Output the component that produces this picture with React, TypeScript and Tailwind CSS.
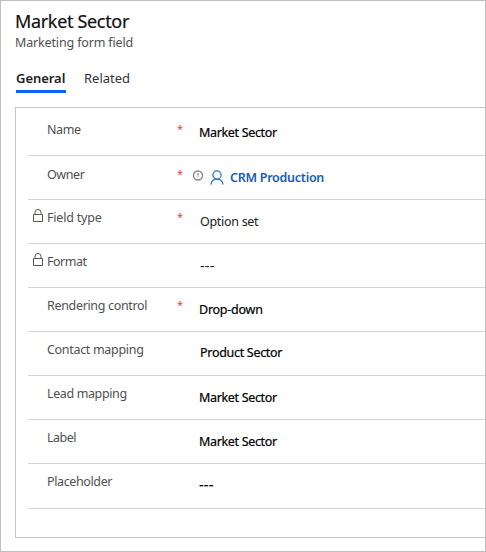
type Row = {
  label: string;
  value: string;
  height: string;
  labelPad: string;
  valuePad: string;
  labelTrack: string;
  valueClass: string;
  required?: boolean;
  locked?: boolean;
  owner?: boolean;
};

const strong = "text-black [-webkit-text-stroke:0.2px_#000]";

const rows: Row[] = [
  { label: "Name", value: "Market Sector", height: "h-12", labelPad: "pt-[11px]", valuePad: "pt-3.5", labelTrack: "tracking-[-0.4px]", valueClass: `${strong} pl-[19px] tracking-[-0.33px]`, required: true },
  { label: "Owner", value: "CRM Production", height: "h-11", labelPad: "pt-2", valuePad: "pt-[11px]", labelTrack: "tracking-[-0.4px]", valueClass: "font-semibold text-[#1160b7] pl-1.5 tracking-[-0.27px]", required: true, owner: true },
  { label: "Field type", value: "Option set", height: "h-11", labelPad: "pt-[7px]", valuePad: "pt-[11px]", labelTrack: "tracking-[-0.2px]", valueClass: "text-[#222] pl-5 tracking-[-0.3px]", required: true, locked: true },
  { label: "Format", value: "---", height: "h-11", labelPad: "pt-[7px]", valuePad: "pt-3", labelTrack: "tracking-[-0.5px]", valueClass: "text-[#222] text-[14.5px] leading-[19px] pl-5 tracking-[0.2px]", locked: true },
  { label: "Rendering control", value: "Drop-down", height: "h-11", labelPad: "pt-[7px]", valuePad: "pt-[11px]", labelTrack: "tracking-[-0.33px]", valueClass: `${strong} pl-[19px] tracking-[-0.25px]`, required: true },
  { label: "Contact mapping", value: "Product Sector", height: "h-11", labelPad: "pt-[7px]", valuePad: "pt-2.5", labelTrack: "tracking-[-0.31px]", valueClass: `${strong} pl-5 tracking-[-0.3px]` },
  { label: "Lead mapping", value: "Market Sector", height: "h-11", labelPad: "pt-[7px]", valuePad: "pt-[11px]", labelTrack: "tracking-[-0.38px]", valueClass: `${strong} pl-[19px] tracking-[-0.33px]` },
  { label: "Label", value: "Market Sector", height: "h-11", labelPad: "pt-[7px]", valuePad: "pt-[11px]", labelTrack: "tracking-[-0.5px]", valueClass: `${strong} pl-[19px] tracking-[-0.33px]` },
  { label: "Placeholder", value: "---", height: "h-[45px]", labelPad: "pt-[7px]", valuePad: "pt-[11px]", labelTrack: "tracking-[-0.38px]", valueClass: `${strong} text-[14.5px] leading-[19px] pl-[19px] tracking-[0.2px]` },
];

function LockIcon() {
  return (
    <svg width="12" height="15" viewBox="0 0 12 15" fill="none" stroke="#555" className="mt-px ml-1 shrink-0">
      <path d="M1.5 6.5h9v7h-9zM3 6.5V4.3a3 2.8 0 0 1 6 0v2.2" />
    </svg>
  );
}

function OwnerIcons() {
  return (
    <div className="flex">
      <svg width="12" height="12" viewBox="0 0 12 12" fill="none" stroke="#888" className="ml-3 mt-[3px]">
        <circle cx="6" cy="5.5" r="4.5" strokeWidth="1.4" />
        <path d="M4.7 4.5 6 3.3l1.3 1.2M6 3.7v3.8" strokeWidth="0.8" />
      </svg>
      <svg width="14" height="15" viewBox="0 0 14 15" fill="none" stroke="#2d74c6" strokeWidth="1.2" className="ml-[6px] mt-[3px]">
        <circle cx="7" cy="5" r="4.1" />
        <path d="M1 14.6C1.4 11.2 3.7 9.2 7 9.2s5.6 2 6 5.4" />
      </svg>
    </div>
  );
}

function FieldRow({ row }: { row: Row }) {
  return (
    <div className={`flex border-b border-[#d2d2d2] text-[12.5px] leading-[22px] whitespace-nowrap ${row.height}`}>
      <div className={`flex w-[19px] shrink-0 ${row.labelPad}`}>{row.locked && <LockIcon />}</div>
      <div className={`w-[130px] shrink-0 text-[#505050] ${row.labelPad} ${row.labelTrack}`}>{row.label}</div>
      <div className={`w-[3px] shrink-0 text-[11px] leading-[19px] text-[#f33b3b] ${row.labelPad}`}>{row.required && "*"}</div>
      <div className={`flex ${row.valuePad}`}>
        {row.owner && <OwnerIcons />}
        <span className={row.valueClass}>{row.value}</span>
      </div>
    </div>
  );
}

export default function App() {
  return (
    <main className="h-[552px] w-[486px] overflow-hidden border border-[#bfbfbf] bg-white font-['Noto_Sans',sans-serif]">
      <header className="h-[106px] pl-[14px] pt-2">
        <h1 className="text-[18px] leading-[25px] font-normal tracking-[-0.33px] text-[#111] [-webkit-text-stroke:0.2px_#111]">Market Sector</h1>
        <p className="text-[12.5px] leading-[17px] tracking-[-0.15px] text-[#505050]">Marketing form field</p>
        <nav className="mt-4 flex gap-[18px] pl-px text-[13px] leading-[22px]">
          <span className="h-[26px] w-[50px] border-b-[3px] border-[#0b63f6] font-semibold tracking-[-0.05px] text-[#222]">General</span>
          <span className="text-[#333]">Related</span>
        </nav>
      </header>
      <section className="ml-[14px] h-[431px] border-y border-l border-[#c6c6c6] pl-3">
        {rows.map((row) => <FieldRow key={row.label} row={row} />)}
      </section>
    </main>
  );
}
